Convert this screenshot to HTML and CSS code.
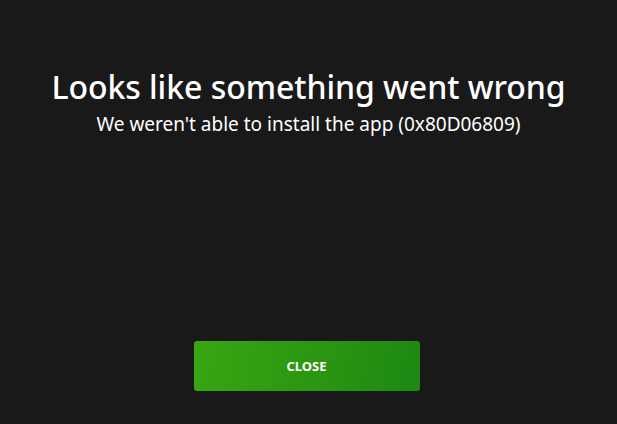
FILE: index.html
```html
<!DOCTYPE html>
<html>
<head>
<meta charset="utf-8">
<link rel="stylesheet" href="styles.css">
</head>
<body>
<main class="dialog">
  <h1 class="title">Looks like something went wrong</h1>
  <p class="subtitle">We weren't able to install the app (0x80D06809)</p>
  <div class="spacer"></div>
  <button class="close-btn">CLOSE</button>
</main>
</body>
</html>
```
FILE: styles.css
```css
html, body {
  margin: 0;
  padding: 0;
  background: #191919;
  width: 617px;
  height: 424px;
  overflow: hidden;
}
.dialog {
  display: flex;
  flex-direction: column;
  align-items: center;
  height: 424px;
  box-sizing: border-box;
  padding-top: 66px;
  color: #ffffff;
}
.title {
  margin: 0;
  font-family: "Noto Sans", sans-serif;
  font-weight: 500;
  font-size: 32px;
  line-height: 42px;
  letter-spacing: -0.05px;
}
.subtitle {
  margin: 4px 0 0 0;
  font-family: "Noto Sans", sans-serif;
  font-size: 19px;
  line-height: 24px;
}
.spacer {
  flex: 0 0 205px;
}
.close-btn {
  width: 226px;
  height: 50px;
  margin-right: 4px;
  border: none;
  border-radius: 3px;
  background: linear-gradient(100deg, #39a613 0%, #2a9611 55%, #1d8813 100%);
  color: #fff;
  font-family: "Noto Sans", sans-serif;
  font-weight: 700;
  font-size: 13px;
  padding: 0;
}
```
